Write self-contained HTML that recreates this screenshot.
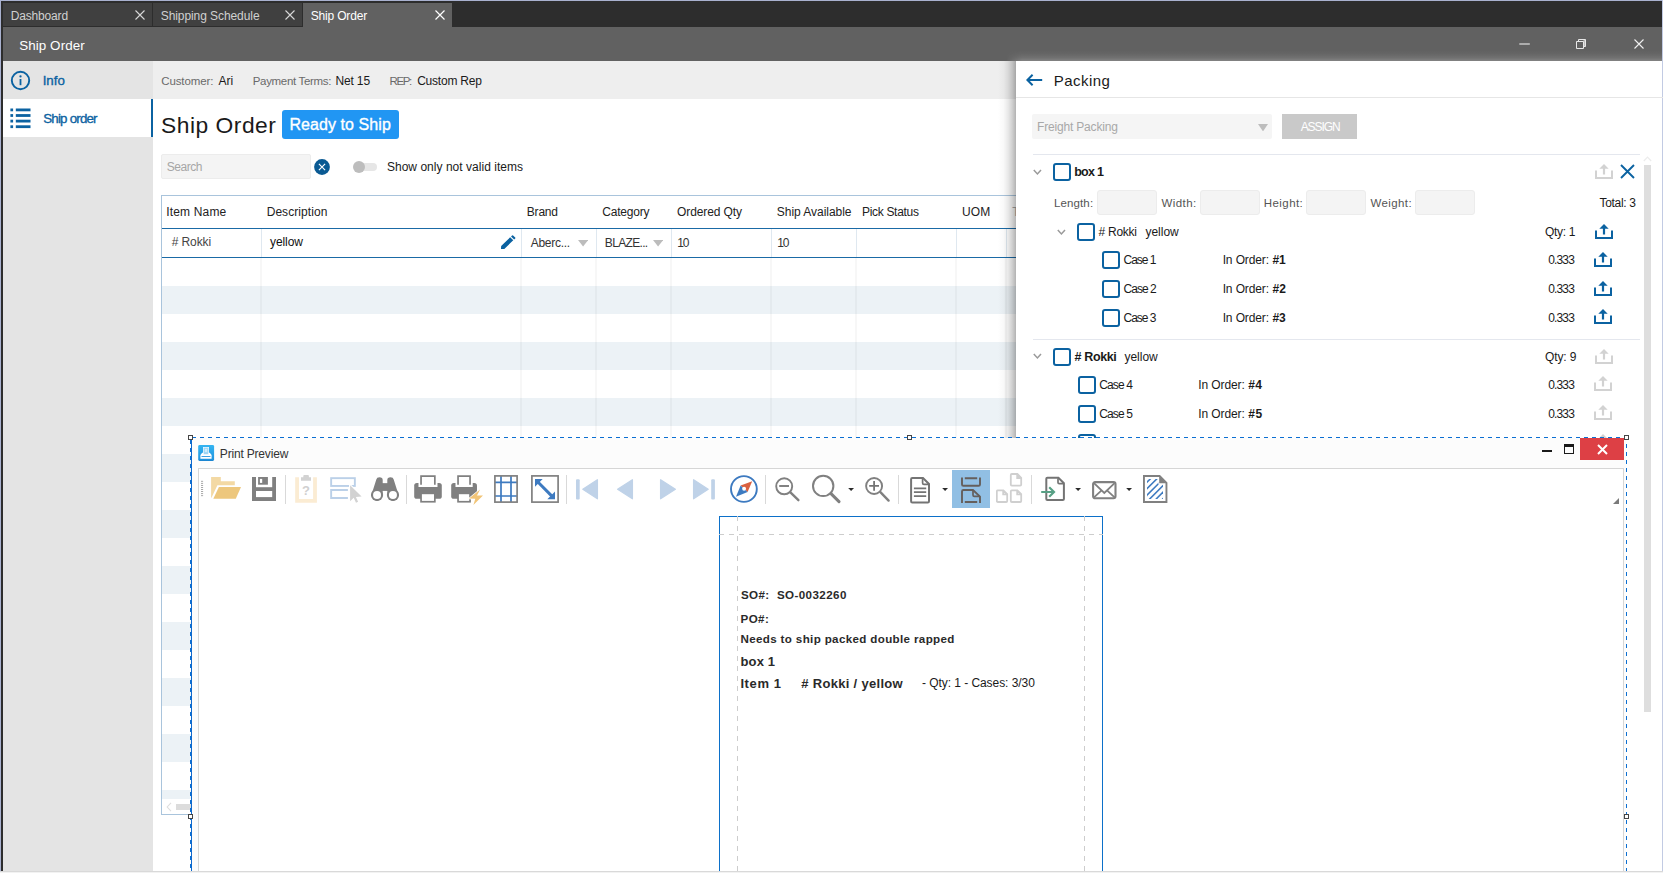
<!DOCTYPE html>
<html>
<head>
<meta charset="utf-8">
<title>Ship Order</title>
<style>
*{box-sizing:border-box;margin:0;padding:0}
html,body{width:1663px;height:873px;overflow:hidden;background:#fff;font-family:"Liberation Sans",sans-serif;font-size:12px;color:#1a1a1a}
.abs{position:absolute}
.t{position:absolute;white-space:pre}
#root{position:relative;width:1663px;height:873px;overflow:hidden;background:#fff}
</style>
</head>
<body>
<div id="root">
<!-- sec_top -->
<div class="abs" style="left:0px;top:0px;width:1663px;height:27px;background:#2d2d2d;"></div>
<div class="abs" style="left:0px;top:0px;width:1663px;height:1px;background:#a9b1cf;"></div>
<div class="abs" style="left:3px;top:3px;width:149px;height:23px;background:#404040;"></div>
<div class="abs" style="left:153px;top:3px;width:149px;height:23px;background:#404040;"></div>
<div class="abs" style="left:303px;top:3px;width:149px;height:24px;background:#616161;"></div>
<span class="t" style="left:10.77px;top:8px;font-size:12px;line-height:16px;color:#d0d0d0;letter-spacing:-0.169px;">Dashboard</span>
<span class="t" style="left:160.71px;top:8px;font-size:12px;line-height:16px;color:#d0d0d0;letter-spacing:-0.076px;">Shipping Schedule</span>
<span class="t" style="left:310.71px;top:8px;font-size:12px;line-height:16px;color:#ffffff;letter-spacing:-0.176px;">Ship Order</span>
<svg class="abs" style="left:135px;top:10px;" width="10" height="10" viewBox="0 0 10 10"><path d="M0.5 0.5 L9.5 9.5 M9.5 0.5 L0.5 9.5" stroke="#d8d8d8" stroke-width="1.1" fill="none"/></svg>
<svg class="abs" style="left:284.5px;top:10px;" width="10" height="10" viewBox="0 0 10 10"><path d="M0.5 0.5 L9.5 9.5 M9.5 0.5 L0.5 9.5" stroke="#d8d8d8" stroke-width="1.1" fill="none"/></svg>
<svg class="abs" style="left:434.5px;top:10px;" width="10" height="10" viewBox="0 0 10 10"><path d="M0.5 0.5 L9.5 9.5 M9.5 0.5 L0.5 9.5" stroke="#ffffff" stroke-width="1.2" fill="none"/></svg>
<div class="abs" style="left:3px;top:27px;width:1660px;height:34px;background:#616161;"></div>
<span class="t" style="left:19.15px;top:37px;font-size:13.4px;line-height:17px;color:#ffffff;letter-spacing:0.092px;">Ship Order</span>
<svg class="abs" style="left:1519px;top:38px;" width="12" height="12" viewBox="0 0 12 12"><path d="M0.3 6 H10.8" stroke="#e0e0e0" stroke-width="1.2"/></svg>
<svg class="abs" style="left:1575px;top:38px;" width="12" height="12" viewBox="0 0 12 12"><path d="M8.5 1.5 H10.5 V8.5 H8.5 Z" fill="#bdbdbd"/><path d="M1.5 3.5 H8.5 V10.5 H1.5 Z M3.5 3.5 V1.5 H10.5 V8.5 H8.5" stroke="#e8e8e8" stroke-width="1" fill="none"/></svg>
<svg class="abs" style="left:1633.5px;top:39px;" width="10" height="10" viewBox="0 0 10 10"><path d="M0.5 0.5 L9.5 9.5 M9.5 0.5 L0.5 9.5" stroke="#f0f0f0" stroke-width="1.1" fill="none"/></svg>
<div class="abs" style="left:0px;top:0px;width:1px;height:873px;background:#a9b1cf;"></div>
<div class="abs" style="left:1px;top:1px;width:2px;height:872px;background:#2d2d2d;"></div>
<div class="abs" style="left:3px;top:61px;width:150px;height:812px;background:#e4e4e4;"></div>
<svg class="abs" style="left:10px;top:70px;" width="21" height="21" viewBox="0 0 21 21"><circle cx="10.5" cy="10.5" r="8.7" fill="none" stroke="#0b62a1" stroke-width="1.9"/><rect x="9.6" y="9" width="1.8" height="6.2" fill="#0b62a1"/><circle cx="10.5" cy="6.4" r="1.15" fill="#0b62a1"/></svg>
<span class="t" style="left:42.63px;top:72px;font-size:13.3px;line-height:17px;color:#0b62a1;letter-spacing:-0.005px;-webkit-text-stroke:0.35px #0b62a1;">Info</span>
<div class="abs" style="left:3px;top:99px;width:150px;height:38px;background:#ffffff;"></div>
<div class="abs" style="left:151px;top:99px;width:2px;height:38px;background:#0b62a1;"></div>
<svg class="abs" style="left:10px;top:108px;" width="21" height="21" viewBox="0 0 21 21"><g fill="#0b62a1"><rect x="0.4" y="0.5" width="2.7" height="2.8"/><rect x="5.8" y="0.5" width="14.7" height="2.8"/><rect x="0.4" y="6.1" width="2.7" height="2.8"/><rect x="5.8" y="6.1" width="14.7" height="2.8"/><rect x="0.4" y="11.7" width="2.7" height="2.8"/><rect x="5.8" y="11.7" width="14.7" height="2.8"/><rect x="0.4" y="17.3" width="2.7" height="2.8"/><rect x="5.8" y="17.3" width="14.7" height="2.8"/></g></svg>
<span class="t" style="left:43.25px;top:110px;font-size:13.3px;line-height:17px;color:#0b62a1;letter-spacing:-0.784px;-webkit-text-stroke:0.35px #0b62a1;">Ship order</span>
<div class="abs" style="left:153px;top:61px;width:863px;height:38px;background:#eeeeee;"></div>
<span class="t" style="left:161.28px;top:74px;font-size:11.5px;line-height:15px;color:#6a6a6a;letter-spacing:-0.116px;">Customer:</span>
<span class="t" style="left:218.43px;top:73px;font-size:12px;line-height:16px;color:#1a1a1a;letter-spacing:0.032px;">Ari</span>
<span class="t" style="left:252.71px;top:74px;font-size:11.5px;line-height:15px;color:#6a6a6a;letter-spacing:-0.321px;">Payment Terms:</span>
<span class="t" style="left:335.47px;top:73px;font-size:12px;line-height:16px;color:#1a1a1a;letter-spacing:-0.155px;">Net 15</span>
<span class="t" style="left:389.51px;top:74px;font-size:11.5px;line-height:15px;color:#6a6a6a;letter-spacing:-1.350px;">REP:</span>
<span class="t" style="left:417.15px;top:73px;font-size:12px;line-height:16px;color:#1a1a1a;letter-spacing:-0.221px;">Custom Rep</span>
<!-- sec_main -->
<div class="abs" style="left:153px;top:99px;width:863px;height:774px;background:#ffffff;"></div>
<span class="t" style="left:161.02px;top:110px;font-size:22.8px;line-height:30px;color:#1a1a1a;letter-spacing:0.517px;">Ship Order</span>
<div class="abs" style="left:282px;top:110px;width:117px;height:28.5px;background:#2196f3;border-radius:3px;"></div>
<span class="t" style="left:289.44px;top:114px;font-size:16px;line-height:21px;color:#ffffff;letter-spacing:0.071px;-webkit-text-stroke:0.35px #fff;">Ready to Ship</span>
<div class="abs" style="left:161px;top:154px;width:150px;height:25px;background:#f4f4f4;border:1px solid #ececec;border-radius:2px;"></div>
<span class="t" style="left:166.81px;top:159px;font-size:12px;line-height:16px;color:#a6a6a6;letter-spacing:-0.502px;">Search</span>
<svg class="abs" style="left:314px;top:159px;" width="16" height="16" viewBox="0 0 16 16"><circle cx="8" cy="8" r="7.9" fill="#0a5a93"/><path d="M4.9 4.9 L11.1 11.1 M11.1 4.9 L4.9 11.1" stroke="#fff" stroke-width="1.15" fill="none"/></svg>
<div class="abs" style="left:355px;top:163.2px;width:22px;height:7.4px;background:#e6e6e6;border-radius:4px;"></div>
<div class="abs" style="left:353px;top:160.8px;width:11.8px;height:11.8px;background:#bdbdbd;border-radius:6px;"></div>
<span class="t" style="left:386.91px;top:159px;font-size:12px;line-height:16px;color:#1a1a1a;letter-spacing:0.028px;">Show only not valid items</span>
<div class="abs" style="left:162px;top:286px;width:854px;height:28px;background:#ecf2f6;"></div>
<div class="abs" style="left:162px;top:342px;width:854px;height:28px;background:#ecf2f6;"></div>
<div class="abs" style="left:162px;top:398px;width:854px;height:28px;background:#ecf2f6;"></div>
<div class="abs" style="left:162px;top:454px;width:854px;height:28px;background:#ecf2f6;"></div>
<div class="abs" style="left:162px;top:510px;width:854px;height:28px;background:#ecf2f6;"></div>
<div class="abs" style="left:162px;top:566px;width:854px;height:28px;background:#ecf2f6;"></div>
<div class="abs" style="left:162px;top:622px;width:854px;height:28px;background:#ecf2f6;"></div>
<div class="abs" style="left:162px;top:678px;width:854px;height:28px;background:#ecf2f6;"></div>
<div class="abs" style="left:162px;top:734px;width:854px;height:28px;background:#ecf2f6;"></div>
<div class="abs" style="left:162px;top:790px;width:854px;height:9px;background:#ecf2f6;"></div>
<div class="abs" style="left:261px;top:229px;width:1px;height:28px;background:#dfe8f0;"></div>
<div class="abs" style="left:260px;top:258px;width:2px;height:541px;background:rgba(0,0,0,0.03);"></div>
<div class="abs" style="left:521px;top:229px;width:1px;height:28px;background:#dfe8f0;"></div>
<div class="abs" style="left:520px;top:258px;width:2px;height:541px;background:rgba(0,0,0,0.03);"></div>
<div class="abs" style="left:596px;top:229px;width:1px;height:28px;background:#dfe8f0;"></div>
<div class="abs" style="left:595px;top:258px;width:2px;height:541px;background:rgba(0,0,0,0.03);"></div>
<div class="abs" style="left:671px;top:229px;width:1px;height:28px;background:#dfe8f0;"></div>
<div class="abs" style="left:670px;top:258px;width:2px;height:541px;background:rgba(0,0,0,0.03);"></div>
<div class="abs" style="left:771px;top:229px;width:1px;height:28px;background:#dfe8f0;"></div>
<div class="abs" style="left:770px;top:258px;width:2px;height:541px;background:rgba(0,0,0,0.03);"></div>
<div class="abs" style="left:856px;top:229px;width:1px;height:28px;background:#dfe8f0;"></div>
<div class="abs" style="left:855px;top:258px;width:2px;height:541px;background:rgba(0,0,0,0.03);"></div>
<div class="abs" style="left:956px;top:229px;width:1px;height:28px;background:#dfe8f0;"></div>
<div class="abs" style="left:955px;top:258px;width:2px;height:541px;background:rgba(0,0,0,0.03);"></div>
<div class="abs" style="left:1006px;top:229px;width:1px;height:28px;background:#dfe8f0;"></div>
<div class="abs" style="left:1005px;top:258px;width:2px;height:541px;background:rgba(0,0,0,0.03);"></div>
<div class="abs" style="left:161px;top:195px;width:855px;height:1px;background:#a9c4dc;"></div>
<div class="abs" style="left:161px;top:195px;width:1px;height:620px;background:#a9c4dc;"></div>
<div class="abs" style="left:161px;top:814px;width:855px;height:1px;background:#a9c4dc;"></div>
<div class="abs" style="left:162px;top:228px;width:854px;height:1px;background:#1a6aa6;"></div>
<div class="abs" style="left:162px;top:257px;width:854px;height:1px;background:#1a6aa6;"></div>
<span class="t" style="left:166.25px;top:204px;font-size:12px;line-height:16px;color:#222222;letter-spacing:0.169px;">Item Name</span>
<span class="t" style="left:266.67px;top:204px;font-size:12px;line-height:16px;color:#222222;letter-spacing:0.063px;">Description</span>
<span class="t" style="left:526.87px;top:204px;font-size:12px;line-height:16px;color:#222222;letter-spacing:-0.241px;">Brand</span>
<span class="t" style="left:602.25px;top:204px;font-size:12px;line-height:16px;color:#222222;letter-spacing:-0.210px;">Category</span>
<span class="t" style="left:677.09px;top:204px;font-size:12px;line-height:16px;color:#222222;letter-spacing:-0.114px;">Ordered Qty</span>
<span class="t" style="left:776.81px;top:204px;font-size:12px;line-height:16px;color:#222222;letter-spacing:-0.038px;">Ship Available</span>
<span class="t" style="left:861.97px;top:204px;font-size:12px;line-height:16px;color:#222222;letter-spacing:-0.311px;">Pick Status</span>
<span class="t" style="left:961.93px;top:204px;font-size:12px;line-height:16px;color:#222222;letter-spacing:0.156px;">UOM</span>
<span class="t" style="left:1012.19px;top:204px;font-size:12px;line-height:16px;color:#a8a8a8;">T</span>
<span class="t" style="left:171.80px;top:234px;font-size:12px;line-height:16px;color:#454545;letter-spacing:-0.126px;"># Rokki</span>
<span class="t" style="left:270.03px;top:234px;font-size:12px;line-height:16px;color:#111111;letter-spacing:-0.092px;">yellow</span>
<svg class="abs" style="left:500.2px;top:234.9px" width="16.6" height="15" viewBox="0 0 17 16" preserveAspectRatio="none"><path d="M1 15 L1.2 11.6 L10.4 2.4 L13.6 5.6 L4.4 14.8 Z M11.3 1.5 L12.4 0.4 Q12.9 0 13.4 0.4 L15.6 2.6 Q16 3.1 15.6 3.6 L14.5 4.7 Z" fill="#0b62a1"/></svg>
<span class="t" style="left:530.73px;top:235px;font-size:12px;line-height:16px;color:#333;letter-spacing:-0.277px;">Aberc...</span>
<svg class="abs" style="left:577.6px;top:240.4px;" width="10.2" height="6.4" viewBox="0 0 10.2 6.4"><path d="M0 0 H10.2 L5.1 6.4 Z" fill="#bcbcbc"/></svg>
<span class="t" style="left:604.87px;top:235px;font-size:12px;line-height:16px;color:#333;letter-spacing:-0.678px;">BLAZE...</span>
<svg class="abs" style="left:652.7px;top:240.4px;" width="10.2" height="6.4" viewBox="0 0 10.2 6.4"><path d="M0 0 H10.2 L5.1 6.4 Z" fill="#bcbcbc"/></svg>
<span class="t" style="left:677.34px;top:235px;font-size:12px;line-height:16px;color:#333;letter-spacing:-1.276px;">10</span>
<span class="t" style="left:777.34px;top:235px;font-size:12px;line-height:16px;color:#333;letter-spacing:-1.276px;">10</span>
<div class="abs" style="left:162px;top:799px;width:854px;height:15px;background:#ffffff;"></div>
<svg class="abs" style="left:166px;top:802px;" width="6" height="10" viewBox="0 0 6 10"><path d="M5 0.8 L1.2 5 L5 9.2" stroke="#dedede" stroke-width="1.1" fill="none"/></svg>
<div class="abs" style="left:176px;top:804px;width:300px;height:6px;background:#dcdcdc;"></div>
<!-- sec_pack -->
<div class="abs" style="left:998px;top:61px;width:18px;height:812px;background:transparent;background:linear-gradient(to right,rgba(0,0,0,0) 0%,rgba(0,0,0,0.025) 30%,rgba(0,0,0,0.085) 55%,rgba(0,0,0,0.18) 78%,rgba(0,0,0,0.30) 100%);"></div>
<div class="abs" style="left:1006px;top:50px;width:657px;height:11px;background:transparent;background:linear-gradient(to bottom,rgba(255,255,255,0) 0%,rgba(255,255,255,0.035) 35%,rgba(255,255,255,0.10) 70%,rgba(255,255,255,0.22) 100%);-webkit-mask-image:linear-gradient(to right,transparent 0,#000 16px);"></div>
<div class="abs" style="left:1016px;top:61px;width:647px;height:812px;background:#ffffff;"></div>
<div class="abs" style="left:1662px;top:0px;width:1px;height:873px;background:#c2cbe3;"></div>
<svg class="abs" style="left:1026px;top:74px;" width="17" height="12" viewBox="0 0 17 12"><path d="M16.2 6 H1.6 M6.6 0.8 L1.4 6 L6.6 11.2" stroke="#0b62a1" stroke-width="2" fill="none"/></svg>
<span class="t" style="left:1053.72px;top:71px;font-size:15px;line-height:20px;color:#1a1a1a;letter-spacing:0.473px;">Packing</span>
<div class="abs" style="left:1016px;top:97px;width:647px;height:1px;background:#e6e6e6;"></div>
<div class="abs" style="left:1032px;top:114px;width:240px;height:25px;background:#f5f5f5;border-radius:2px;"></div>
<span class="t" style="left:1036.97px;top:119px;font-size:12px;line-height:16px;color:#a8a8a8;letter-spacing:-0.173px;">Freight Packing</span>
<svg class="abs" style="left:1258.2px;top:123.8px;" width="10" height="7.4" viewBox="0 0 10 7.4"><path d="M0 0 H10 L5 7.4 Z" fill="#bdbdbd"/></svg>
<div class="abs" style="left:1282px;top:114px;width:75px;height:25px;background:#c9c9c9;"></div>
<span class="t" style="left:1300.63px;top:119px;font-size:12px;line-height:16px;color:#ffffff;letter-spacing:-1.050px;">ASSIGN</span>
<div class="abs" style="left:1033px;top:154px;width:607px;height:1px;background:#e4e7ee;"></div>
<svg class="abs" style="left:1643px;top:156px;" width="9" height="6" viewBox="0 0 9 6"><path d="M0.8 5 L4.5 1.2 L8.2 5" stroke="#ececec" stroke-width="1.2" fill="none"/></svg>
<div class="abs" style="left:1644px;top:164.5px;width:7px;height:547.5px;background:#dedede;"></div>
<svg class="abs" style="left:1033.4px;top:168.8px;" width="9" height="7" viewBox="0 0 9 7"><path d="M0.8 1 L4.4 5 L8 1" stroke="#9a9a9a" stroke-width="1.5" fill="none"/></svg>
<div class="abs" style="left:1053px;top:163px;width:18px;height:18px;background:#ffffff;border:2px solid #0b62a1;border-radius:3px;"></div>
<span class="t" style="left:1074.14px;top:164px;font-size:12.5px;line-height:16px;color:#1a1a1a;font-weight:700;letter-spacing:-0.725px;">box 1</span>
<svg class="abs" style="left:1595px;top:164.4px;" width="18" height="16" viewBox="0 0 18 16"><path d="M9 0 L13.7 4.7 H10.1 V10.4 H7.9 V4.7 H4.3 Z" fill="#d2d2d2"/><path d="M1 6.4 V14.1 H17 V6.4" stroke="#d2d2d2" stroke-width="2" fill="none"/></svg>
<svg class="abs" style="left:1620px;top:163.8px;" width="15" height="15" viewBox="0 0 15 15"><path d="M1 1 L14 14 M14 1 L1 14" stroke="#0b62a1" stroke-width="1.9" fill="none"/></svg>
<span class="t" style="left:1054.01px;top:196px;font-size:11.5px;line-height:15px;color:#555555;letter-spacing:0.119px;">Length:</span>
<div class="abs" style="left:1097.4px;top:190.2px;width:59.6px;height:24.6px;background:#f4f4f4;border:1px solid #ececec;border-radius:3px;"></div>
<span class="t" style="left:1161.40px;top:196px;font-size:11.5px;line-height:15px;color:#555555;letter-spacing:0.440px;">Width:</span>
<div class="abs" style="left:1200.2px;top:190.2px;width:59.6px;height:24.6px;background:#f4f4f4;border:1px solid #ececec;border-radius:3px;"></div>
<span class="t" style="left:1263.81px;top:196px;font-size:11.5px;line-height:15px;color:#555555;letter-spacing:0.424px;">Height:</span>
<div class="abs" style="left:1306.2px;top:190.2px;width:59.6px;height:24.6px;background:#f4f4f4;border:1px solid #ececec;border-radius:3px;"></div>
<span class="t" style="left:1370.40px;top:196px;font-size:11.5px;line-height:15px;color:#555555;letter-spacing:0.402px;">Weight:</span>
<div class="abs" style="left:1415px;top:190.2px;width:59.6px;height:24.6px;background:#f4f4f4;border:1px solid #ececec;border-radius:3px;"></div>
<span class="t" style="left:1599.59px;top:195px;font-size:12px;line-height:16px;color:#1a1a1a;letter-spacing:-0.344px;">Total: 3</span>
<svg class="abs" style="left:1057.4px;top:228.7px;" width="9" height="7" viewBox="0 0 9 7"><path d="M0.8 1 L4.4 5 L8 1" stroke="#9a9a9a" stroke-width="1.5" fill="none"/></svg>
<div class="abs" style="left:1077px;top:223px;width:18px;height:18px;background:#ffffff;border:2px solid #0b62a1;border-radius:3px;"></div>
<span class="t" style="left:1098.50px;top:224px;font-size:12px;line-height:16px;color:#1a1a1a;letter-spacing:-0.259px;"># Rokki</span>
<span class="t" style="left:1145.43px;top:224px;font-size:12px;line-height:16px;color:#1a1a1a;letter-spacing:-0.012px;">yellow</span>
<span class="t" style="left:1545.09px;top:224px;font-size:12px;line-height:16px;color:#1a1a1a;letter-spacing:-0.313px;">Qty: 1</span>
<svg class="abs" style="left:1595px;top:224px;" width="18" height="16" viewBox="0 0 18 16"><path d="M9 0 L13.7 4.7 H10.1 V10.4 H7.9 V4.7 H4.3 Z" fill="#0b62a1"/><path d="M1 6.4 V14.1 H17 V6.4" stroke="#0b62a1" stroke-width="2" fill="none"/></svg>
<div class="abs" style="left:1102px;top:251px;width:18px;height:18px;background:#ffffff;border:2px solid #0b62a1;border-radius:3px;"></div>
<span class="t" style="left:1123.55px;top:252px;font-size:12px;line-height:16px;color:#1a1a1a;letter-spacing:-1.008px;">Case 1</span>
<span class="t" style="left:1222.65px;top:252px;font-size:12px;line-height:16px;color:#1a1a1a;letter-spacing:-0.119px;">In Order:</span>
<span class="t" style="left:1272.45px;top:252px;font-size:12px;line-height:16px;color:#1a1a1a;font-weight:700;letter-spacing:-0.116px;">#1</span>
<span class="t" style="left:1548.18px;top:252px;font-size:12px;line-height:16px;color:#1a1a1a;letter-spacing:-0.835px;">0.333</span>
<svg class="abs" style="left:1594px;top:251.59999999999997px;" width="18" height="16" viewBox="0 0 18 16"><path d="M9 0 L13.7 4.7 H10.1 V10.4 H7.9 V4.7 H4.3 Z" fill="#0b62a1"/><path d="M1 6.4 V14.1 H17 V6.4" stroke="#0b62a1" stroke-width="2" fill="none"/></svg>
<div class="abs" style="left:1102px;top:280px;width:18px;height:18px;background:#ffffff;border:2px solid #0b62a1;border-radius:3px;"></div>
<span class="t" style="left:1123.55px;top:281px;font-size:12px;line-height:16px;color:#1a1a1a;letter-spacing:-1.003px;">Case 2</span>
<span class="t" style="left:1222.65px;top:281px;font-size:12px;line-height:16px;color:#1a1a1a;letter-spacing:-0.119px;">In Order:</span>
<span class="t" style="left:1272.45px;top:281px;font-size:12px;line-height:16px;color:#1a1a1a;font-weight:700;letter-spacing:0.028px;">#2</span>
<span class="t" style="left:1548.18px;top:281px;font-size:12px;line-height:16px;color:#1a1a1a;letter-spacing:-0.835px;">0.333</span>
<svg class="abs" style="left:1594px;top:280.5px;" width="18" height="16" viewBox="0 0 18 16"><path d="M9 0 L13.7 4.7 H10.1 V10.4 H7.9 V4.7 H4.3 Z" fill="#0b62a1"/><path d="M1 6.4 V14.1 H17 V6.4" stroke="#0b62a1" stroke-width="2" fill="none"/></svg>
<div class="abs" style="left:1102px;top:309px;width:18px;height:18px;background:#ffffff;border:2px solid #0b62a1;border-radius:3px;"></div>
<span class="t" style="left:1123.55px;top:310px;font-size:12px;line-height:16px;color:#1a1a1a;letter-spacing:-1.020px;">Case 3</span>
<span class="t" style="left:1222.65px;top:310px;font-size:12px;line-height:16px;color:#1a1a1a;letter-spacing:-0.119px;">In Order:</span>
<span class="t" style="left:1272.45px;top:310px;font-size:12px;line-height:16px;color:#1a1a1a;font-weight:700;letter-spacing:-0.020px;">#3</span>
<span class="t" style="left:1548.18px;top:310px;font-size:12px;line-height:16px;color:#1a1a1a;letter-spacing:-0.835px;">0.333</span>
<svg class="abs" style="left:1594px;top:309.4px;" width="18" height="16" viewBox="0 0 18 16"><path d="M9 0 L13.7 4.7 H10.1 V10.4 H7.9 V4.7 H4.3 Z" fill="#0b62a1"/><path d="M1 6.4 V14.1 H17 V6.4" stroke="#0b62a1" stroke-width="2" fill="none"/></svg>
<div class="abs" style="left:1033px;top:339px;width:607px;height:1px;background:#e4e7ee;"></div>
<svg class="abs" style="left:1033.4px;top:353.20000000000005px;" width="9" height="7" viewBox="0 0 9 7"><path d="M0.8 1 L4.4 5 L8 1" stroke="#9a9a9a" stroke-width="1.5" fill="none"/></svg>
<div class="abs" style="left:1053px;top:348px;width:18px;height:18px;background:#ffffff;border:2px solid #0b62a1;border-radius:3px;"></div>
<span class="t" style="left:1074.54px;top:349px;font-size:12.5px;line-height:16px;color:#1a1a1a;font-weight:700;letter-spacing:-0.362px;"># Rokki</span>
<span class="t" style="left:1124.43px;top:349px;font-size:12px;line-height:16px;color:#1a1a1a;letter-spacing:-0.012px;">yellow</span>
<span class="t" style="left:1545.09px;top:349px;font-size:12px;line-height:16px;color:#1a1a1a;letter-spacing:-0.155px;">Qty: 9</span>
<svg class="abs" style="left:1595px;top:348.6px;" width="18" height="16" viewBox="0 0 18 16"><path d="M9 0 L13.7 4.7 H10.1 V10.4 H7.9 V4.7 H4.3 Z" fill="#d2d2d2"/><path d="M1 6.4 V14.1 H17 V6.4" stroke="#d2d2d2" stroke-width="2" fill="none"/></svg>
<div class="abs" style="left:1078px;top:376px;width:18px;height:18px;background:#ffffff;border:2px solid #0b62a1;border-radius:3px;"></div>
<span class="t" style="left:1099.15px;top:377px;font-size:12px;line-height:16px;color:#1a1a1a;letter-spacing:-0.854px;">Case 4</span>
<span class="t" style="left:1198.35px;top:377px;font-size:12px;line-height:16px;color:#1a1a1a;letter-spacing:-0.107px;">In Order:</span>
<span class="t" style="left:1248.25px;top:377px;font-size:12px;line-height:16px;color:#1a1a1a;font-weight:700;letter-spacing:0.220px;">#4</span>
<span class="t" style="left:1548.18px;top:377px;font-size:12px;line-height:16px;color:#1a1a1a;letter-spacing:-0.835px;">0.333</span>
<svg class="abs" style="left:1594px;top:376.3px;" width="18" height="16" viewBox="0 0 18 16"><path d="M9 0 L13.7 4.7 H10.1 V10.4 H7.9 V4.7 H4.3 Z" fill="#d2d2d2"/><path d="M1 6.4 V14.1 H17 V6.4" stroke="#d2d2d2" stroke-width="2" fill="none"/></svg>
<div class="abs" style="left:1078px;top:405px;width:18px;height:18px;background:#ffffff;border:2px solid #0b62a1;border-radius:3px;"></div>
<span class="t" style="left:1099.15px;top:406px;font-size:12px;line-height:16px;color:#1a1a1a;letter-spacing:-0.825px;">Case 5</span>
<span class="t" style="left:1198.35px;top:406px;font-size:12px;line-height:16px;color:#1a1a1a;letter-spacing:-0.107px;">In Order:</span>
<span class="t" style="left:1248.25px;top:406px;font-size:12px;line-height:16px;color:#1a1a1a;font-weight:700;letter-spacing:0.484px;">#5</span>
<span class="t" style="left:1548.18px;top:406px;font-size:12px;line-height:16px;color:#1a1a1a;letter-spacing:-0.835px;">0.333</span>
<svg class="abs" style="left:1594px;top:405.3px;" width="18" height="16" viewBox="0 0 18 16"><path d="M9 0 L13.7 4.7 H10.1 V10.4 H7.9 V4.7 H4.3 Z" fill="#d2d2d2"/><path d="M1 6.4 V14.1 H17 V6.4" stroke="#d2d2d2" stroke-width="2" fill="none"/></svg>
<div class="abs" style="left:1078px;top:434px;width:18px;height:18px;background:#ffffff;border:2px solid #0b62a1;border-radius:3px;"></div>
<span class="t" style="left:1099.15px;top:435px;font-size:12px;line-height:16px;color:#1a1a1a;letter-spacing:-0.820px;">Case 6</span>
<span class="t" style="left:1198.35px;top:435px;font-size:12px;line-height:16px;color:#1a1a1a;letter-spacing:-0.107px;">In Order:</span>
<span class="t" style="left:1248.25px;top:435px;font-size:12px;line-height:16px;color:#1a1a1a;font-weight:700;letter-spacing:0.580px;">#6</span>
<span class="t" style="left:1548.18px;top:435px;font-size:12px;line-height:16px;color:#1a1a1a;letter-spacing:-0.835px;">0.333</span>
<svg class="abs" style="left:1594px;top:434.3px;" width="18" height="16" viewBox="0 0 18 16"><path d="M9 0 L13.7 4.7 H10.1 V10.4 H7.9 V4.7 H4.3 Z" fill="#d2d2d2"/><path d="M1 6.4 V14.1 H17 V6.4" stroke="#d2d2d2" stroke-width="2" fill="none"/></svg>
<!-- sec_pp -->
<div class="abs" style="left:192px;top:438px;width:1434px;height:435px;background:#fcfcfc;"></div>
<div class="abs" style="left:198px;top:468px;width:1426px;height:406px;background:#ffffff;border:1px solid #d6d6d6;"></div>
<svg class="abs" style="left:198px;top:445px;" width="17" height="17" viewBox="0 0 17 17"><defs><linearGradient id="ig" x1="0" y1="0" x2="0" y2="1"><stop offset="0" stop-color="#34b4f1"/><stop offset="0.9" stop-color="#1f95e0"/><stop offset="1" stop-color="#1a80cc"/></linearGradient></defs><rect x="0.2" y="0" width="15.9" height="15.9" rx="1.4" fill="url(#ig)"/><rect x="5.4" y="2.4" width="5.2" height="7" fill="rgba(255,255,255,0.55)" stroke="#eaf6fe" stroke-width="0.8"/><rect x="6.9" y="3.9" width="2.2" height="3.2" fill="rgba(255,255,255,0.5)"/><path d="M4.2 7.7 H5.4 V9.5 H10.6 V7.7 H11.8 L13.6 9.9 V13.7 H2.4 V9.9 Z" fill="#fff"/><rect x="3.5" y="11" width="9" height="0.9" fill="#2496e2"/></svg>
<span class="t" style="left:219.87px;top:446px;font-size:12px;line-height:16px;color:#333333;letter-spacing:-0.187px;">Print Preview</span>
<div class="abs" style="left:1542px;top:450px;width:10px;height:2px;background:#1a1a1a;"></div>
<div class="abs" style="left:1564px;top:444px;width:10px;height:10px;background:transparent;border:1px solid #1a1a1a;border-top:3px solid #1a1a1a;"></div>
<div class="abs" style="left:1580px;top:438px;width:44px;height:22px;background:#dd4045;"></div>
<svg class="abs" style="left:1597px;top:444px;" width="11" height="11" viewBox="0 0 11 11"><path d="M1 1 L10 10 M10 1 L1 10" stroke="#fff" stroke-width="2" fill="none"/></svg>
<svg class="abs" style="left:201px;top:480px;" width="3" height="17" viewBox="0 0 3 17"><rect x="0" y="0.85" width="2.1" height="0.85" fill="#9a9a9a"/><rect x="0" y="2.91" width="2.1" height="0.85" fill="#9a9a9a"/><rect x="0" y="4.97" width="2.1" height="0.85" fill="#9a9a9a"/><rect x="0" y="7.03" width="2.1" height="0.85" fill="#9a9a9a"/><rect x="0" y="9.09" width="2.1" height="0.85" fill="#9a9a9a"/><rect x="0" y="11.15" width="2.1" height="0.85" fill="#9a9a9a"/><rect x="0" y="13.21" width="2.1" height="0.85" fill="#9a9a9a"/><rect x="0" y="15.27" width="2.1" height="0.85" fill="#9a9a9a"/></svg>
<svg class="abs" style="left:210px;top:476px;" width="32" height="24" viewBox="0 0 32 24"><path d="M1.1 1 H10.8 V5.2 H24.8 V9.2 H7.4 L1.5 21.8 H1.1 Z" fill="#f3d9a4"/><path d="M8.9 11 H31 L25.8 22.8 H3.3 Z" fill="#edc77d"/></svg>
<svg class="abs" style="left:252px;top:477px;" width="24" height="24" viewBox="0 0 24 24"><rect x="0" y="0" width="24" height="24" fill="#808080"/><rect x="4" y="0" width="16.2" height="10.2" fill="#fff"/><rect x="6.1" y="0" width="9.8" height="7.7" fill="#808080"/><rect x="7.9" y="1.9" width="2.3" height="4" fill="#fff"/><rect x="4" y="14" width="16.2" height="6.1" fill="#fff"/></svg>
<div class="abs" style="left:285px;top:475px;width:1px;height:29px;background:#d9d9d9;"></div>
<svg class="abs" style="left:295px;top:475px;" width="22" height="28" viewBox="0 0 22 28"><path d="M0.2 2.2 H4 V24 H18.1 V2.2 H21.9 V27.8 H0.2 Z" fill="#fbecd3"/><path d="M6 2.2 H8.3 V1 Q8.3 0 9.3 0 H12.9 Q13.9 0 13.9 1 V2.2 H16 V5.8 H6 Z" fill="#d2d2d2"/><text x="11" y="20" font-family="Liberation Sans" font-size="13" font-weight="700" fill="#d0d0d0" text-anchor="middle">?</text></svg>
<svg class="abs" style="left:329px;top:476px;" width="34" height="28" viewBox="0 0 34 28"><rect x="2.15" y="2.15" width="23.7" height="7.8" fill="none" stroke="#bbd0e8" stroke-width="1.9"/><path d="M18.9 14.05 H2.15 V21.95 H18.9" fill="none" stroke="#bbd0e8" stroke-width="1.9"/><path d="M21.1 9.3 V25.2 L24.7 21.8 L27 26.7 L29.1 25.7 L26.9 21 L32.6 20.5 Z" fill="#d2d2d2" stroke="#fff" stroke-width="2.2" paint-order="stroke"/></svg>
<svg class="abs" style="left:371px;top:477px;" width="28" height="24" viewBox="0 0 28 24"><g fill="#808080"><path d="M5.3 2.6 Q5.7 0.2 8.5 0.2 Q11.7 0.2 11.7 3 V18 H0.4 Z"/><path d="M22.7 2.6 Q22.3 0.2 19.5 0.2 Q16.3 0.2 16.3 3 V18 H27.6 Z"/><rect x="10.5" y="6.15" width="7" height="7.75"/><circle cx="6.05" cy="18" r="6.1"/><circle cx="21.95" cy="18" r="6.1"/></g><circle cx="6.05" cy="18.05" r="4" fill="#fff"/><circle cx="21.95" cy="18.05" r="4" fill="#fff"/></svg>
<div class="abs" style="left:406px;top:475px;width:1px;height:29px;background:#d9d9d9;"></div>
<svg class="abs" style="left:414px;top:475px;" width="28.2" height="28" viewBox="0 0 28.2 28"><rect x="0.2" y="7.9" width="27.599999999999998" height="15.9" rx="2.6" fill="#808080"/><rect x="4.5" y="7" width="19.0" height="5" fill="#fff"/><path d="M7.05 9.8 V1.05 H20.849999999999998 V9.8" fill="#fff" stroke="#808080" stroke-width="1.7"/><rect x="7.05" y="18.35" width="13.799999999999999" height="8.4" fill="#fff" stroke="#808080" stroke-width="1.7"/></svg>
<svg class="abs" style="left:451px;top:475px;" width="26.4" height="28" viewBox="0 0 26.4 28"><rect x="0.2" y="7.9" width="25.799999999999997" height="15.9" rx="2.6" fill="#808080"/><rect x="4.5" y="7" width="17.2" height="5" fill="#fff"/><path d="M7.05 9.8 V1.05 H19.049999999999997 V9.8" fill="#fff" stroke="#808080" stroke-width="1.7"/><rect x="7.05" y="18.35" width="11.999999999999998" height="8.4" fill="#fff" stroke="#808080" stroke-width="1.7"/></svg>
<svg class="abs" style="left:468px;top:488px;" width="17" height="18" viewBox="0 0 17 18"><path d="M12.1 1.6 L1 10.6 L7.3 10.8 L5.4 17.1 L15 7.4 L9 7.4 Z" fill="#f1c477" stroke="#fff" stroke-width="1.6" paint-order="stroke"/></svg>
<svg class="abs" style="left:494px;top:475px;" width="24" height="28" viewBox="0 0 24 28"><path d="M7 1 V27 M17 1 V27 M1 7.4 H23 M1 21 H23" stroke="#3d7ac0" stroke-width="1.7"/><rect x="0.9" y="0.9" width="22.2" height="26.2" fill="none" stroke="#808080" stroke-width="1.7"/></svg>
<svg class="abs" style="left:531px;top:475px;" width="28" height="28" viewBox="0 0 28 28"><rect x="0.9" y="0.9" width="26.2" height="26.2" fill="#fff" stroke="#808080" stroke-width="1.7"/><path d="M7.4 7.5 L20.6 20.9" stroke="#3d7ac0" stroke-width="3"/><path d="M4 4.1 H11.7 L4 11.8 Z M24 24.3 H16.3 L24 16.6 Z" fill="#3d7ac0"/></svg>
<div class="abs" style="left:566px;top:475px;width:1px;height:29px;background:#d9d9d9;"></div>
<svg class="abs" style="left:575px;top:479px;" width="24" height="21" viewBox="0 0 24 21"><rect x="1" y="0.2" width="3.7" height="20.2" rx="1" fill="#bfd2e8"/><path d="M22.4 0.8 V19.8 L7.8 10.3 Z" fill="#bfd2e8" stroke="#bfd2e8" stroke-width="1.3" stroke-linejoin="round"/></svg>
<svg class="abs" style="left:616px;top:479px;" width="18" height="21" viewBox="0 0 18 21"><path d="M16.4 0.8 V19.8 L1.6 10.3 Z" fill="#bfd2e8" stroke="#bfd2e8" stroke-width="1.3" stroke-linejoin="round"/></svg>
<svg class="abs" style="left:659px;top:479px;" width="18" height="21" viewBox="0 0 18 21"><path d="M1.6 0.8 V19.8 L16.4 10.3 Z" fill="#bfd2e8" stroke="#bfd2e8" stroke-width="1.3" stroke-linejoin="round"/></svg>
<svg class="abs" style="left:692px;top:479px;" width="24" height="21" viewBox="0 0 24 21"><path d="M1.6 0.8 V19.8 L16.2 10.3 Z" fill="#bfd2e8" stroke="#bfd2e8" stroke-width="1.3" stroke-linejoin="round"/><rect x="19.2" y="0.2" width="3.7" height="20.2" rx="1" fill="#bfd2e8"/></svg>
<svg class="abs" style="left:729px;top:474px;" width="30" height="30" viewBox="0 0 30 30"><circle cx="14.9" cy="15" r="12.9" fill="#fff" stroke="#3d7ac0" stroke-width="1.9"/><path d="M23.2 7.2 L18.6 18 L11.6 11.4 Z" fill="#da6140"/><path d="M7 22.8 L11.6 11.4 L18.6 18 Z" fill="#3d7ac0"/><circle cx="15.1" cy="14.8" r="1.95" fill="#fff"/></svg>
<div class="abs" style="left:765px;top:475px;width:1px;height:29px;background:#d9d9d9;"></div>
<svg class="abs" style="left:774px;top:476px;" width="27" height="27" viewBox="0 0 27 27"><circle cx="10.2" cy="10.3" r="8" fill="none" stroke="#808080" stroke-width="1.9"/><path d="M16.4 16.4 L24.4 24.2" stroke="#808080" stroke-width="2.4" stroke-linecap="round"/><path d="M5.2 10 H15" stroke="#747474" stroke-width="1.8"/></svg>
<svg class="abs" style="left:811px;top:474px;" width="30" height="30" viewBox="0 0 30 30"><circle cx="12.2" cy="11.9" r="10.2" fill="none" stroke="#808080" stroke-width="2"/><path d="M20 19.6 L28 27.6" stroke="#808080" stroke-width="3" stroke-linecap="round"/></svg>
<svg class="abs" style="left:847.6px;top:488px;" width="7" height="4" viewBox="0 0 7 4"><path d="M0.2 0.1 H6 L3.1 3.05 Z" fill="#2b2b2b"/></svg>
<svg class="abs" style="left:864px;top:476px;" width="27" height="27" viewBox="0 0 27 27"><circle cx="10.1" cy="10" r="8" fill="none" stroke="#808080" stroke-width="1.9"/><path d="M16.4 16.2 L24.6 24.6" stroke="#808080" stroke-width="2.4" stroke-linecap="round"/><path d="M5.2 9.8 H15 M10.1 4.9 V14.7" stroke="#747474" stroke-width="1.8"/></svg>
<div class="abs" style="left:898px;top:475px;width:1px;height:29px;background:#d9d9d9;"></div>
<svg class="abs" style="left:909px;top:476px;" width="22" height="28" viewBox="0 0 22 28"><path d="M2.1 3.2 Q2.1 2 3.3 2 H14 L20 8 V25.3 Q20 26.5 18.8 26.5 H3.3 Q2.1 26.5 2.1 25.3 Z" fill="#fff" stroke="#747474" stroke-width="2"/><path d="M13.6 2.4 V7 Q13.6 8.4 15 8.4 H19.6" fill="none" stroke="#747474" stroke-width="1.7"/><path d="M4.9 12.3 H17.2 M4.9 16.2 H17.2 M4.9 20.1 H17.2" stroke="#747474" stroke-width="1.8"/></svg>
<svg class="abs" style="left:941.6px;top:488px;" width="7" height="4" viewBox="0 0 7 4"><path d="M0.2 0.1 H6 L3.1 3.05 Z" fill="#2b2b2b"/></svg>
<div class="abs" style="left:952px;top:470px;width:38px;height:38px;background:#91bfe4;"></div>
<svg class="abs" style="left:960px;top:476px;" width="22" height="28" viewBox="0 0 22 28"><path d="M2 1.4 V8.4 Q2 9.8 3.4 9.8 H18.6 Q20 9.8 20 8.4 V1.4 M4.8 2.2 H17.2" fill="none" stroke="#655f5c" stroke-width="1.9"/><path d="M2 27 V15.4 Q2 14 3.4 14 H13 L20 20.6 V27 M4.8 26 H17.2" fill="none" stroke="#655f5c" stroke-width="1.9"/><path d="M13 14.4 V19 Q13 20.4 14.4 20.4 H19.6" fill="none" stroke="#655f5c" stroke-width="1.7"/></svg>
<svg class="abs" style="left:996px;top:473px;" width="28" height="31" viewBox="0 0 28 31"><path d="M14.8 2.0 Q14.8 1.0 15.8 1.0 H21.4 L25.2 4.8 V11.6 Q25.2 12.6 24.2 12.6 H15.8 Q14.8 12.6 14.8 11.6 Z M21.2 1.2 V5.0 H25" fill="none" stroke="#cfcfcf" stroke-width="1.8"/><path d="M0.8 18.400000000000002 Q0.8 17.400000000000002 1.8 17.400000000000002 H7.4 L11.2 21.200000000000003 V28.0 Q11.2 29.0 10.2 29.0 H1.8 Q0.8 29.0 0.8 28.0 Z M7.2 17.6 V21.400000000000002 H11" fill="none" stroke="#cfcfcf" stroke-width="1.8"/><path d="M14.8 18.400000000000002 Q14.8 17.400000000000002 15.8 17.400000000000002 H21.4 L25.2 21.200000000000003 V28.0 Q25.2 29.0 24.2 29.0 H15.8 Q14.8 29.0 14.8 28.0 Z M21.2 17.6 V21.400000000000002 H25" fill="none" stroke="#cfcfcf" stroke-width="1.8"/></svg>
<div class="abs" style="left:1031px;top:475px;width:1px;height:29px;background:#d9d9d9;"></div>
<svg class="abs" style="left:1040px;top:476px;" width="26" height="26" viewBox="0 0 26 26"><path d="M6.3 23 V2.8 Q6.3 1.7 7.4 1.7 H18.4 L23.9 7.2 V22.9 Q23.9 24 22.8 24 H7.4 Q6.3 24 6.3 22.9 Z" fill="#fff" stroke="#747474" stroke-width="2"/><path d="M18 2.2 V6.4 Q18 7.6 19.2 7.6 H23.4" fill="none" stroke="#747474" stroke-width="1.7"/><path d="M1.2 16 H13.6 M9.2 11.2 L14 16 L9.2 20.8" fill="none" stroke="#57a085" stroke-width="2.2"/></svg>
<svg class="abs" style="left:1075.4px;top:488px;" width="7" height="4" viewBox="0 0 7 4"><path d="M0.2 0.1 H6 L3.1 3.05 Z" fill="#2b2b2b"/></svg>
<svg class="abs" style="left:1092px;top:481px;" width="25" height="19" viewBox="0 0 25 19"><rect x="1.1" y="1.1" width="22.4" height="16.2" rx="2" fill="#fff" stroke="#808080" stroke-width="2.1"/><path d="M2 2.2 L12.3 12 L22.6 2.2 M2 16.4 L9.6 9.4 M22.6 16.4 L15 9.4" fill="none" stroke="#808080" stroke-width="1.8"/></svg>
<svg class="abs" style="left:1126.2px;top:488px;" width="7" height="4" viewBox="0 0 7 4"><path d="M0.2 0.1 H6 L3.1 3.05 Z" fill="#2b2b2b"/></svg>
<svg class="abs" style="left:1143px;top:475px;" width="25" height="28" viewBox="0 0 25 28"><defs><clipPath id="wmc"><path d="M4 4.1 H15.4 V9.4 H20 V23.9 H4 Z"/></clipPath></defs><g clip-path="url(#wmc)"><path d="M-14.8 26 L11.2 0" stroke="#3d7ac0" stroke-width="1.55"/><path d="M-8.3 26 L17.7 0" stroke="#3d7ac0" stroke-width="1.55"/><path d="M-1.8000000000000007 26 L24.2 0" stroke="#3d7ac0" stroke-width="1.55"/><path d="M4.699999999999999 26 L30.7 0" stroke="#3d7ac0" stroke-width="1.55"/><path d="M11.200000000000003 26 L37.2 0" stroke="#3d7ac0" stroke-width="1.55"/><path d="M17.700000000000003 26 L43.7 0" stroke="#3d7ac0" stroke-width="1.55"/></g><path d="M0.95 0.95 H16.6 L23.45 7.8 V27.05 H0.95 Z" fill="none" stroke="#808080" stroke-width="1.9"/><path d="M16.2 1 V8.2 H23.4 Z" fill="#808080"/></svg>
<svg class="abs" style="left:1613px;top:498px;" width="6" height="6" viewBox="0 0 6 6"><path d="M6 0 V6 H0 Z" fill="#7a7a7a"/></svg>
<div class="abs" style="left:719px;top:516px;width:384px;height:360px;background:#ffffff;border:1px solid #0c70c9;"></div>
<div class="abs" style="left:719px;top:534px;width:384px;height:1px;background:transparent;background:repeating-linear-gradient(to right,#cdcdcd 0 5px,transparent 5px 10px);"></div>
<div class="abs" style="left:737px;top:516px;width:1px;height:357px;background:transparent;background:repeating-linear-gradient(to bottom,#cdcdcd 0 5px,transparent 5px 10px);"></div>
<div class="abs" style="left:1084px;top:516px;width:1px;height:357px;background:transparent;background:repeating-linear-gradient(to bottom,#cdcdcd 0 5px,transparent 5px 10px);"></div>
<span class="t" style="left:740.93px;top:587px;font-size:11.6px;line-height:15px;color:#2a2a2a;font-weight:700;letter-spacing:0.413px;">SO#:  SO-0032260</span>
<span class="t" style="left:740.48px;top:611px;font-size:11.6px;line-height:15px;color:#2a2a2a;font-weight:700;letter-spacing:0.435px;">PO#:</span>
<span class="t" style="left:740.48px;top:631px;font-size:11.6px;line-height:15px;color:#2a2a2a;font-weight:700;letter-spacing:0.353px;">Needs to ship packed double rapped</span>
<span class="t" style="left:740.40px;top:653px;font-size:13px;line-height:17px;color:#2a2a2a;font-weight:700;letter-spacing:0.185px;">box 1</span>
<span class="t" style="left:740.39px;top:675px;font-size:13px;line-height:17px;color:#2a2a2a;font-weight:700;letter-spacing:0.628px;">Item 1</span>
<span class="t" style="left:801.23px;top:675px;font-size:13px;line-height:17px;color:#2a2a2a;font-weight:700;letter-spacing:0.312px;"># Rokki / yellow</span>
<span class="t" style="left:922.12px;top:675px;font-size:12px;line-height:16px;color:#1a1a1a;letter-spacing:-0.064px;">- Qty: 1 - Cases: 3/30</span>
<div class="abs" style="left:192px;top:437px;width:1435px;height:1px;background:transparent;background:repeating-linear-gradient(to right,#0c6fd2 0 4px,transparent 4px 8px);"></div>
<div class="abs" style="left:1626px;top:436px;width:1px;height:437px;background:transparent;background:repeating-linear-gradient(to bottom,#0c6fd2 0 4px,transparent 4px 8px);"></div>
<div class="abs" style="left:191px;top:438px;width:1px;height:435px;background:#0f69cd;"></div>
<div class="abs" style="left:190px;top:440px;width:1px;height:433px;background:transparent;background:repeating-linear-gradient(to bottom,#0c6fd2 0 4px,transparent 4px 8px);"></div>
<div class="abs" style="left:188.0px;top:435.0px;width:5px;height:5px;background:#ffffff;border:1px solid #454545;"></div>
<div class="abs" style="left:907.0px;top:435.0px;width:5px;height:5px;background:#ffffff;border:1px solid #454545;"></div>
<div class="abs" style="left:1624.0px;top:435.0px;width:5px;height:5px;background:#ffffff;border:1px solid #454545;"></div>
<div class="abs" style="left:188.0px;top:814.0px;width:5px;height:5px;background:#ffffff;border:1px solid #454545;"></div>
<div class="abs" style="left:1624.0px;top:814.0px;width:5px;height:5px;background:#ffffff;border:1px solid #454545;"></div>
<div class="abs" style="left:0px;top:871px;width:1663px;height:1px;background:#d9d9d9;"></div>
<div class="abs" style="left:0px;top:872px;width:1663px;height:1px;background:#f2f2f2;"></div>
</div>
</body>
</html>
